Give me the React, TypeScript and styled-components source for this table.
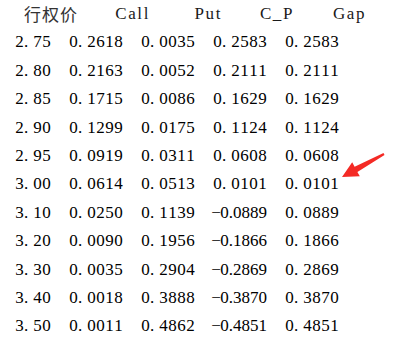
import React from 'react';
import styled, { createGlobalStyle } from 'styled-components';

type Row = { strike: string; call: string; put: string; cp: string; gap: string };

const rows: Row[] = [
  { strike: '2.75', call: '0.2618', put: '0.0035', cp: '0.2583', gap: '0.2583' },
  { strike: '2.80', call: '0.2163', put: '0.0052', cp: '0.2111', gap: '0.2111' },
  { strike: '2.85', call: '0.1715', put: '0.0086', cp: '0.1629', gap: '0.1629' },
  { strike: '2.90', call: '0.1299', put: '0.0175', cp: '0.1124', gap: '0.1124' },
  { strike: '2.95', call: '0.0919', put: '0.0311', cp: '0.0608', gap: '0.0608' },
  { strike: '3.00', call: '0.0614', put: '0.0513', cp: '0.0101', gap: '0.0101' },
  { strike: '3.10', call: '0.0250', put: '0.1139', cp: '-0.0889', gap: '0.0889' },
  { strike: '3.20', call: '0.0090', put: '0.1956', cp: '-0.1866', gap: '0.1866' },
  { strike: '3.30', call: '0.0035', put: '0.2904', cp: '-0.2869', gap: '0.2869' },
  { strike: '3.40', call: '0.0018', put: '0.3888', cp: '-0.3870', gap: '0.3870' },
  { strike: '3.50', call: '0.0011', put: '0.4862', cp: '-0.4851', gap: '0.4851' },
];

const columns = ['Call', 'Put', 'C_P', 'Gap'];

// console-style numbers: every half-width character gets its own 9px cell
const Mono: React.FC<{ text: string }> = ({ text }) => (
  <>
    {[...text].map((ch, i) => (
      <Glyph key={i} $dot={ch === '.'}>
        {ch === '-' ? '\u2212' : ch}
      </Glyph>
    ))}
  </>
);

const App: React.FC = () => {
  return (
    <Page>
      <GlobalStyle />
      <Frame>
        <HeaderRow>
          <IndexName>行权价</IndexName>
          {columns.map((c) => (
            <HeadCell key={c}>{c}</HeadCell>
          ))}
        </HeaderRow>
        {rows.map((r) => (
          <DataRow key={r.strike}>
            <IndexCell>
              <Mono text={r.strike} />
            </IndexCell>
            <ValueCell>
              <Mono text={r.call} />
            </ValueCell>
            <ValueCell>
              <Mono text={r.put} />
            </ValueCell>
            <ValueCell>
              <Mono text={r.cp} />
            </ValueCell>
            <ValueCell>
              <Mono text={r.gap} />
            </ValueCell>
          </DataRow>
        ))}
        <Arrow viewBox="0 0 52 36" width="52" height="36">
          <polygon
            points="6,31 16.2,16.3 18.6,20.7 47.5,7.1 48.5,8.9 21.4,25.9 23.8,30.3"
            fill="#f42a25"
          />
        </Arrow>
      </Frame>
    </Page>
  );
};

const GlobalStyle = createGlobalStyle`
  html, body {
    margin: 0;
    padding: 0;
    background: #ffffff;
  }
`;

const Page = styled.div`
  width: 420px;
  height: 342px;
  overflow: hidden;
  background: #ffffff;
`;

const Frame = styled.div`
  position: relative;
  padding: 0 0 0 15px;
  font-family: 'Liberation Serif', 'Noto Sans CJK SC', serif;
  font-size: 17px;
  color: #000000;
`;

const Glyph = styled.span<{ $dot: boolean }>`
  display: inline-block;
  width: 9px;
  text-align: ${(p) => (p.$dot ? 'left' : 'center')};
  white-space: pre;
`;

const HeaderRow = styled.div`
  display: flex;
  height: 28.4px;
  line-height: 28.4px;
  color: #1a1a1a;
`;

const IndexName = styled.div`
  width: 54px;
  margin-left: 9px;
  font-family: 'Noto Sans CJK SC', sans-serif;
  font-size: 17px;
  letter-spacing: 1px;
  color: #333333;
`;

const HeadCell = styled.div`
  width: 72px;
  text-align: right;
  letter-spacing: 1.6px;
  white-space: pre;
`;

const DataRow = styled.div`
  display: flex;
  height: 28.4px;
  line-height: 28.4px;
`;

const IndexCell = styled.div`
  width: 36px;
  display: flex;
  justify-content: flex-end;
`;

const ValueCell = styled.div`
  width: 54px;
  margin-left: 18px;
  display: flex;
  justify-content: flex-end;
`;

const Arrow = styled.svg`
  position: absolute;
  left: 336px;
  top: 146px;
`;

export default App;
